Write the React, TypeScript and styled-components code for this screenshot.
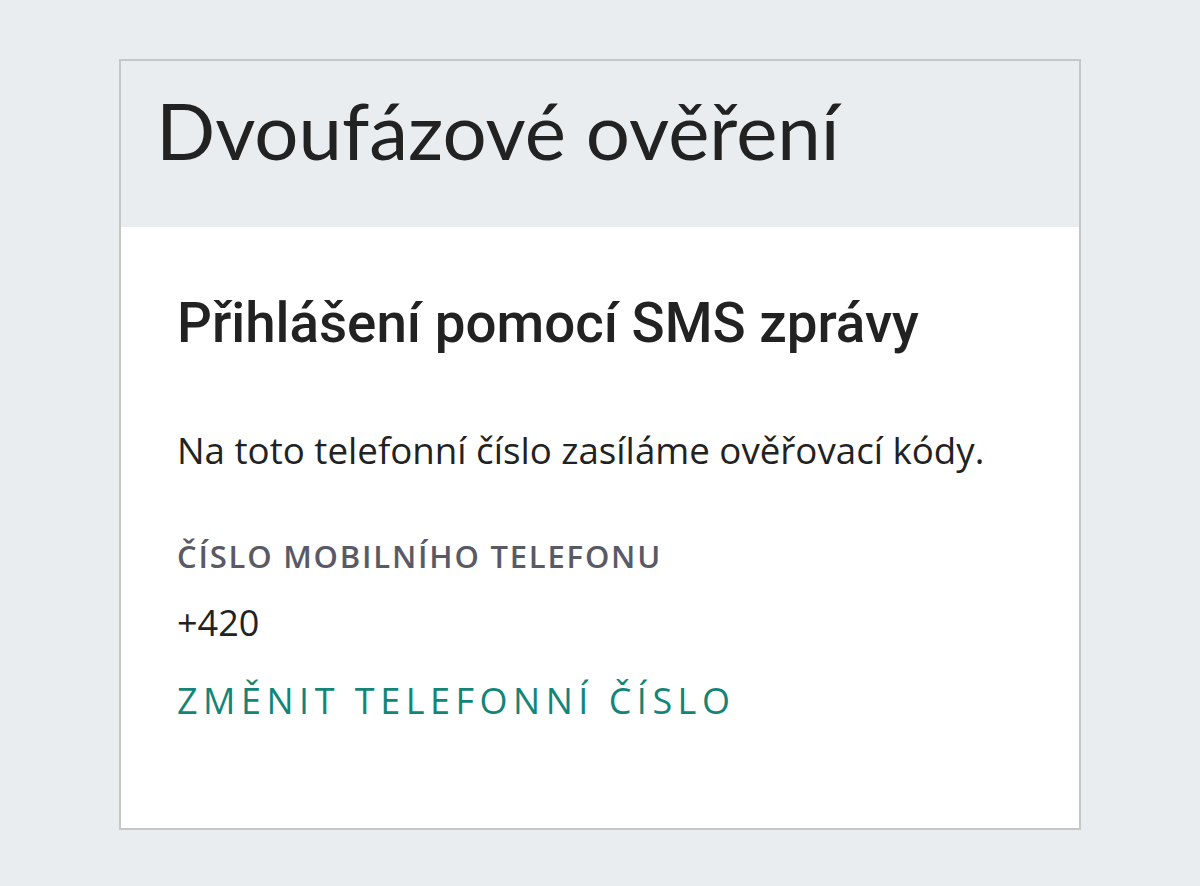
import React from 'react';
import styled, { createGlobalStyle } from 'styled-components';

const GlobalStyle = createGlobalStyle`
  html, body {
    margin: 0;
    padding: 0;
    background: #e9edf0;
  }
`;

const Page = styled.div`
  min-height: 886px;
  box-sizing: border-box;
  padding: 59px 119px;
  font-family: 'Open Sans', 'Liberation Sans', sans-serif;
`;

const Card = styled.section`
  border: 2px solid #c6c6c6;
  background: #ffffff;
  height: 771px;
  box-sizing: border-box;
  display: flex;
  flex-direction: column;
`;

const CardHeader = styled.header`
  background: #e9edf0;
  height: 166px;
  box-sizing: border-box;
  padding: 21px 0 0 35px;
`;

const Title = styled.h1`
  margin: 0;
  font-family: Lato, 'Open Sans', sans-serif;
  font-weight: 400;
  font-size: 78px;
  line-height: 96px;
  color: #222222;
`;

const CardBody = styled.div`
  padding: 64px 56px 0 56px;
  display: flex;
  flex-direction: column;
`;

const Heading = styled.h2`
  margin: 0 0 72px;
  font-family: Roboto, 'Liberation Sans', sans-serif;
  font-weight: 500;
  font-size: 54.7px;
  line-height: 64px;
  color: #222222;
`;

const Text = styled.p`
  margin: 0 0 63px;
  font-size: 36.7px;
  line-height: 46px;
  color: #222222;
`;

const Label = styled.div`
  font-size: 31px;
  line-height: 40px;
  font-weight: 600;
  letter-spacing: 1.8px;
  color: #5a5a66;
  margin-bottom: 24px;
`;

const Value = styled.div`
  font-size: 36px;
  line-height: 46px;
  color: #222222;
  margin-bottom: 32px;
`;

const ChangeLink = styled.a`
  font-size: 36px;
  line-height: 46px;
  letter-spacing: 5.5px;
  color: #138577;
  text-decoration: none;
  cursor: pointer;
`;

export default function App() {
  return (
    <>
      <GlobalStyle />
      <Page>
        <Card>
          <CardHeader>
            <Title>Dvoufázové ověření</Title>
          </CardHeader>
          <CardBody>
            <Heading>Přihlášení pomocí SMS zprávy</Heading>
            <Text>Na toto telefonní číslo zasíláme ověřovací kódy.</Text>
            <Label>ČÍSLO MOBILNÍHO TELEFONU</Label>
            <Value>+420</Value>
            <ChangeLink>ZMĚNIT TELEFONNÍ ČÍSLO</ChangeLink>
          </CardBody>
        </Card>
      </Page>
    </>
  );
}
